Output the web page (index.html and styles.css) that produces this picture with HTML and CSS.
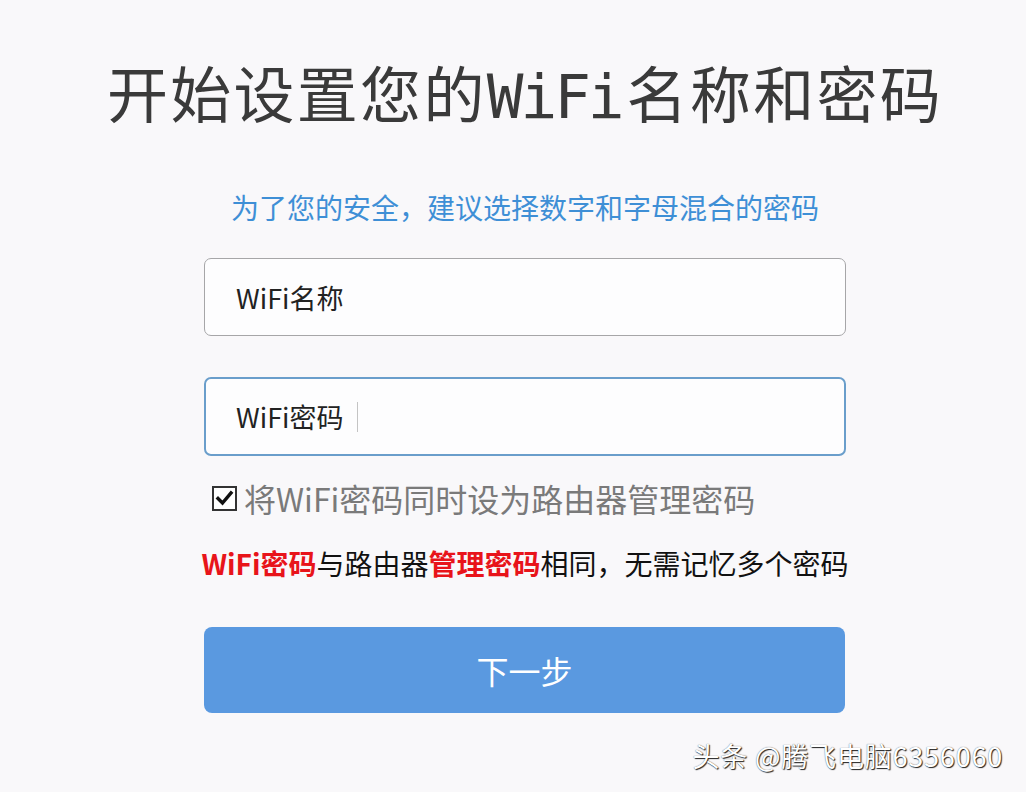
FILE: index.html
```html
<!DOCTYPE html>
<html lang="zh-CN">
<head>
    <meta charset="UTF-8">
    <meta name="viewport" content="width=device-width, initial-scale=1.0">
    <title>WiFi设置</title>
    <link rel="stylesheet" href="styles.css">
</head>
<body>
    <div class="page">
        <h1>开始设置您的<span class="mono">WiFi</span>名称和密码</h1>
        <p class="tip">为了您的安全，建议选择数字和字母混合的密码</p>

        <div class="form">
            <div class="field">WiFi名称</div>
            <div class="field focused">WiFi密码<span class="caret"></span></div>

            <label class="check-row">
                <span class="check-box">
                    <svg width="21" height="21" viewBox="0 0 21 21">
                        <path d="M4 10.5 L8.5 15 L17 5" fill="none" stroke="#111" stroke-width="3.4" stroke-linecap="square"/>
                    </svg>
                </span>
                <span>将WiFi密码同时设为路由器管理密码</span>
            </label>

            <p class="note"><b>WiFi密码</b>与路由器<b>管理密码</b>相同，无需记忆多个密码</p>

            <button class="next-btn">下一步</button>
        </div>
    </div>

    <div class="watermark">头条 @腾飞电脑6356060</div>
</body>
</html>
```

FILE: styles.css
```css
body {
    margin: 0;
    background: #f9f8fa;
    font-family: "Noto Sans CJK SC", "Noto Sans", sans-serif;
    min-height: 792px;
    position: relative;
}

.page {
    padding: 60px 0 0 24px;
}

h1 {
    margin: 0;
    text-align: center;
    font-size: 61px;
    line-height: 64px;
    font-weight: 400;
    color: #3a3a3a;
    letter-spacing: 2.3px;
}

h1 .mono {
    font-family: "DejaVu Sans Mono", "Liberation Mono", monospace;
    letter-spacing: -3px;
    margin-right: 5px;
}

.tip {
    margin: 63px 0 0;
    text-align: center;
    font-size: 28px;
    line-height: 30px;
    color: #3e8fd6;
}

.form {
    width: 642px;
    margin: 36px auto 0;
}

.field {
    box-sizing: border-box;
    height: 78px;
    padding-left: 31px;
    display: flex;
    align-items: center;
    background: #fdfdfe;
    border: 1px solid #a6a6a8;
    border-radius: 7px;
    font-size: 27px;
    color: #222;
}

.field.focused {
    margin-top: 41px;
    height: 79px;
    border: 2px solid #6a9ecb;
    padding-left: 30px;
}

.caret {
    display: inline-block;
    width: 1px;
    height: 30px;
    margin-left: 14px;
    background: #c4c4c4;
}

.check-row {
    display: flex;
    align-items: center;
    margin: 26px 0 0 8px;
    font-size: 32px;
    line-height: 32px;
    color: #7a7a7a;
}

.check-box {
    box-sizing: border-box;
    width: 25px;
    height: 25px;
    border: 2px solid #333;
    background: #fff;
    display: flex;
    align-items: center;
    justify-content: center;
    margin-right: 7px;
}

.note {
    margin: 34px -4px 0 -4px;
    text-align: center;
    font-size: 28px;
    line-height: 30px;
    color: #111;
}

.note b {
    color: #e8141a;
    font-weight: 700;
}

.next-btn {
    display: block;
    width: 641px;
    height: 86px;
    margin: 49px 0 0 0;
    border: none;
    border-radius: 8px;
    background: #5a99e0;
    color: #fff;
    font-family: inherit;
    font-size: 32px;
    cursor: pointer;
}

.watermark {
    position: absolute;
    right: 23px;
    top: 740px;
    font-size: 27px;
    line-height: 32px;
    letter-spacing: 0.8px;
    color: #fff;
    text-shadow: 1px 1px 1px #222, 0 0 1px #555;
}
```
